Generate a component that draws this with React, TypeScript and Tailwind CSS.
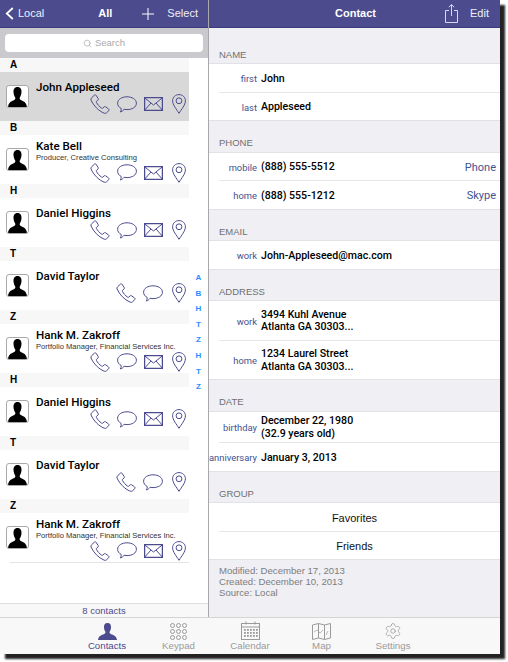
import { Search, Settings } from "lucide-react";

const ink = "#4b4b8e";

function PhoneIcon() {
  return (
    <svg width="20" height="20" viewBox="0 0 20 20" fill="none" stroke={ink} strokeWidth="1">
      <path d="M1.6 3.8 L4.6 1 C5.2 .6 5.8 .8 6.1 1.3 L8.2 4.6 C8.5 5.2 8.4 5.7 8 6 L6.5 7.3 C6.2 7.6 6.2 8 6.4 8.4 C7.6 10.6 9.3 12.6 11.7 14.2 C12.1 14.4 12.5 14.4 12.8 14.1 L14.2 12.8 C14.6 12.5 15.1 12.5 15.6 12.8 L18.6 15 C19.2 15.5 19.2 16.1 18.8 16.6 L16.4 18.9 C15.8 19.4 15 19.5 14.2 19.2 C8.4 16.8 3.6 11.6 1 6 C.8 5.2 1 4.4 1.6 3.8 Z" />
    </svg>
  );
}

function BubbleIcon() {
  return (
    <svg width="20" height="17" viewBox="0 0 20 17" fill="none" stroke={ink} strokeWidth="1">
      <path d="M10 .8 C15 .8 19.4 3.3 19.4 7.2 C19.4 11.1 15.2 13.6 10 13.6 C9 13.6 8 13.5 7.1 13.3 C6.2 14.5 4.8 15.6 3.4 16 C4 15 4.3 13.8 4.2 12.5 C1.9 11.3 .6 9.4 .6 7.2 C.6 3.3 5 .8 10 .8 Z" />
    </svg>
  );
}

function MailIcon() {
  return (
    <svg width="19" height="14" viewBox="0 0 19 14" fill="none" stroke={ink}>
      <rect x=".6" y=".6" width="17.8" height="12.8" strokeWidth="1.3" />
      <path d="M.6 .8 L9.5 8 L18.4 .8 M.6 13.2 L7 6 M18.4 13.2 L12 6" strokeWidth="1" />
    </svg>
  );
}

function PinIcon() {
  return (
    <svg width="14" height="20" viewBox="0 0 14 20" fill="none" stroke={ink} strokeWidth="1">
      <path d="M7 19.3 C4.6 15.4 .6 10.8 .6 6.8 C.6 3.2 3.4 .6 7 .6 C10.6 .6 13.4 3.2 13.4 6.8 C13.4 10.8 9.4 15.4 7 19.3 Z" />
      <circle cx="7" cy="6.8" r="2.9" />
    </svg>
  );
}

function Avatar() {
  return (
    <div className="flex h-[23px] w-[23px] shrink-0 items-end justify-center overflow-hidden rounded-[3px] border border-[#a9a9a9] bg-white">
      <svg width="19" height="20" viewBox="0 0 19 20" fill="#000">
        <path d="M9.5 0 C12.4 0 13.6 2.2 13.5 5 C13.4 7.6 12.6 9.4 11.8 10.6 C11.4 11.6 11.7 12.4 12.8 13 C15.4 14.2 18.4 15 19 20 L0 20 C.6 15 3.6 14.2 6.2 13 C7.3 12.4 7.6 11.6 7.2 10.6 C6.4 9.4 5.6 7.6 5.5 5 C5.4 2.2 6.6 0 9.5 0 Z" />
      </svg>
    </div>
  );
}

type Person = { letter: string; name: string; title?: string; mail: boolean; selected?: boolean };

const people: Person[] = [
  { letter: "A", name: "John Appleseed", mail: true, selected: true },
  { letter: "B", name: "Kate Bell", title: "Producer, Creative Consulting", mail: true },
  { letter: "H", name: "Daniel Higgins", mail: true },
  { letter: "T", name: "David Taylor", mail: false },
  { letter: "Z", name: "Hank M. Zakroff", title: "Portfolio Manager, Financial Services Inc.", mail: true },
  { letter: "H", name: "Daniel Higgins", mail: true },
  { letter: "T", name: "David Taylor", mail: false },
  { letter: "Z", name: "Hank M. Zakroff", title: "Portfolio Manager, Financial Services Inc.", mail: true },
];

function PersonRow({ person }: { person: Person }) {
  return (
    <>
      <div className="flex h-[14px] w-[189px] items-center bg-[#f7f7f7] pl-[10px] text-[10px] font-bold leading-none text-black">
        {person.letter}
      </div>
      <div className={`flex h-[49px] w-[189px] items-center pl-[6px] ${person.selected ? "bg-[#d8d8d8]" : "bg-white"}`}>
        <Avatar />
        <div className="flex h-full min-w-0 flex-1 flex-col pl-[7px]">
          <div className={`font-['Roboto',sans-serif] text-[11.6px] font-medium leading-[14px] text-black ${person.title ? "pt-[3.5px]" : "pt-[8px]"}`}>{person.name}</div>
          {person.title && <div className="truncate text-[7.6px] leading-[10px] text-[#333]">{person.title}</div>}
          <div className="flex items-center justify-end gap-[7px] pr-[3px]">
            <PhoneIcon />
            <BubbleIcon />
            {person.mail && <MailIcon />}
            <div className="ml-[2px]">
              <PinIcon />
            </div>
          </div>
        </div>
      </div>
    </>
  );
}

function SectionTitle({ title, first }: { title: string; first?: boolean }) {
  return (
    <div className={`flex items-end border-b border-[#e2e2e6] pb-[4px] pl-[10px] text-[9.5px] leading-none text-[#6f6f73] ${first ? "h-[36px]" : "h-[31.5px]"}`}>
      {title}
    </div>
  );
}

function Field({ label, lines, action, height }: { label: string; lines: string[]; action?: string; height: string }) {
  return (
    <div className={`flex items-center pt-[2px] ${height}`}>
      <div className="w-[48px] shrink-0 text-right font-['Roboto',sans-serif] text-[9.4px] leading-none text-[#3f5390]">{label}</div>
      <div className="flex-1 pl-[4px] font-['Roboto',sans-serif] text-[10.6px] font-medium leading-[12.5px] text-black">
        {lines.map((line) => (
          <div key={line}>{line}</div>
        ))}
      </div>
      {action && <div className="pr-[4px] font-['Roboto',sans-serif] text-[11px] leading-none text-[#3f5390]">{action}</div>}
    </div>
  );
}

function Group({ children }: { children: React.ReactNode }) {
  return <div className="border-b border-[#e2e2e6] bg-white">{children}</div>;
}

function RowLine() {
  return <div className="ml-[10px] h-px bg-[#e6e6e8]" />;
}

function TabItem({ label, active, children }: { label: string; active?: boolean; children: React.ReactNode }) {
  return (
    <div className={`flex w-[71.5px] flex-col items-center ${active ? "text-[#4b4b8e]" : "text-[#9a9a9a]"}`}>
      <div className="flex h-[22px] items-end justify-center">{children}</div>
      <div className="text-[9.7px] leading-[12px]">{label}</div>
    </div>
  );
}

export default function App() {
  return (
    <div className="h-[662px] w-[508px] bg-white font-['Liberation_Sans',sans-serif]">
      <div className="flex h-[654px] w-[500px] flex-col shadow-[5px_5px_2px_#222222]">
        <div className="flex min-h-0 flex-1">
          {/* Contact list */}
          <div className="relative flex w-[208px] shrink-0 flex-col bg-white">
            <div className="flex h-[28px] items-center border-b border-[#3a3a80] bg-[#4b4b8e] text-[11px] text-[#f0f0f8]">
              <svg width="9" height="13" viewBox="0 0 9 13" fill="none" stroke="#fff" strokeWidth="1.8" className="ml-[5px]">
                <path d="M7.8 1 L1.8 6.5 L7.8 12" />
              </svg>
              <span className="ml-[4px]">Local</span>
              <span className="ml-[54px] font-bold text-white">All</span>
              <svg width="12" height="12" viewBox="0 0 12 12" stroke="#fff" strokeWidth="1" className="ml-[30px]">
                <path d="M6 0 V12 M0 6 H12" />
              </svg>
              <span className="ml-[13px]">Select</span>
            </div>
            <div className="h-[30px] bg-[#c9c9ce] px-[5px] pt-[6px]">
              <div className="flex h-[18px] items-center justify-center gap-[3px] rounded-[4px] bg-white text-[9.5px] text-[#aaaaaa]">
                <Search size={9} strokeWidth={1.5} color="#999999" />
                <span>Search</span>
              </div>
            </div>
            <div>
              {people.map((person, i) => (
                <PersonRow key={i} person={person} />
              ))}
            </div>
            <div className="ml-[10px] h-px w-[179px] bg-[#e4e4e4]" />
            <div className="flex-1" />
            <div className="flex h-[14px] items-center justify-center border-t border-[#dddddd] bg-[#f8f8f8] text-[9.5px] leading-none text-[#4b4b8e]">
              8 contacts
            </div>
            <div className="absolute left-[189px] top-[270px] flex w-[19px] flex-col items-center text-[8px] font-bold leading-[15.6px] text-[#2b8cff]">
              {["A", "B", "H", "T", "Z", "H", "T", "Z"].map((letter, i) => (
                <div key={i}>{letter}</div>
              ))}
            </div>
          </div>
          <div className="w-px shrink-0 bg-[#a8a8ac]" />
          {/* Contact detail */}
          <div className="flex min-w-0 flex-1 flex-col bg-[#efeff4]">
            <div className="flex h-[28px] items-center border-b border-[#3a3a80] bg-[#4b4b8e] text-[11px] text-[#f0f0f8]">
              <span className="ml-[126px] w-[40px] whitespace-nowrap text-[11px] font-bold text-white">Contact</span>
              <svg width="13" height="19" viewBox="0 0 13 19" fill="none" stroke="#d8d8ee" strokeWidth="1" className="ml-[70px]">
                <path d="M4 6.5 H.5 V18.5 H12.5 V6.5 H9 M6.5 12 V.8 M3.8 3.2 L6.5 .6 L9.2 3.2" />
              </svg>
              <span className="ml-[12px]">Edit</span>
            </div>
            <SectionTitle title="NAME" first />
            <Group>
              <Field label="first" lines={["John"]} height="h-[27.5px]" />
              <RowLine />
              <Field label="last" lines={["Appleseed"]} height="h-[27.5px]" />
            </Group>
            <SectionTitle title="PHONE" />
            <Group>
              <Field label="mobile" lines={["(888) 555-5512"]} action="Phone" height="h-[27.5px]" />
              <RowLine />
              <Field label="home" lines={["(888) 555-1212"]} action="Skype" height="h-[27.5px]" />
            </Group>
            <SectionTitle title="EMAIL" />
            <Group>
              <Field label="work" lines={["John-Appleseed@mac.com"]} height="h-[27.5px]" />
            </Group>
            <SectionTitle title="ADDRESS" />
            <Group>
              <Field label="work" lines={["3494 Kuhl Avenue", "Atlanta GA 30303..."]} height="h-[38.5px]" />
              <RowLine />
              <Field label="home" lines={["1234 Laurel Street", "Atlanta GA 30303..."]} height="h-[38.5px]" />
            </Group>
            <SectionTitle title="DATE" />
            <Group>
              <Field label="birthday" lines={["December 22, 1980", "(32.9 years old)"]} height="h-[30.5px]" />
              <RowLine />
              <Field label="anniversary" lines={["January 3, 2013"]} height="h-[27.5px]" />
            </Group>
            <SectionTitle title="GROUP" />
            <Group>
              <div className="flex h-[27.5px] items-center justify-center pt-[2px] text-[11px] text-[#111]">Favorites</div>
              <RowLine />
              <div className="flex h-[27.5px] items-center justify-center pt-[2px] text-[11px] text-[#111]">Friends</div>
            </Group>
            <div className="px-[10px] pt-[5px] text-[9.6px] leading-[11px] text-[#7d7d80]">
              <div>Modified: December 17, 2013</div>
              <div>Created: December 10, 2013</div>
              <div>Source: Local</div>
            </div>
          </div>
        </div>
        {/* Tab bar */}
        <div className="flex h-[37px] justify-center border-t border-[#d4d4d4] bg-[#f8f8f8]">
          <TabItem label="Contacts" active>
            <svg width="19" height="17" viewBox="0 0 19 17" fill="#4b4b8e">
              <path d="M9.5 0 C12.2 0 13.2 2 13 4.4 C12.9 6.4 12.2 7.8 11.6 8.8 C11.3 9.8 11.8 10.4 12.8 10.9 C15.4 12 18.6 12.8 19 17 L0 17 C.4 12.8 3.6 12 6.2 10.9 C7.2 10.4 7.7 9.8 7.4 8.8 C6.8 7.8 6.1 6.4 6 4.4 C5.8 2 6.8 0 9.5 0 Z" />
            </svg>
          </TabItem>
          <TabItem label="Keypad">
            <svg width="17" height="17" viewBox="0 0 17 17" fill="none" stroke="#9a9a9a" strokeWidth="1">
              {[2.5, 8.5, 14.5].map((y) =>
                [2.5, 8.5, 14.5].map((x) => <circle key={`${x}-${y}`} cx={x} cy={y} r="2" />),
              )}
            </svg>
          </TabItem>
          <TabItem label="Calendar">
            <svg width="19" height="19" viewBox="0 0 19 19" fill="none" stroke="#9a9a9a" strokeWidth="1">
              <rect x=".5" y="2.5" width="18" height="16" />
              <path d="M.5 6 H18.5 M5 .5 V3.5 M14 .5 V3.5" />
              <g fill="#9a9a9a" stroke="none">
                {[8, 11, 14].map((y) =>
                  [3, 6, 9, 12, 15].map((x) => <rect key={`${x}-${y}`} x={x} y={y} width="1.8" height="1.8" />),
                )}
              </g>
            </svg>
          </TabItem>
          <TabItem label="Map">
            <svg width="19" height="17" viewBox="0 0 19 17" fill="none" stroke="#9a9a9a" strokeWidth="1">
              <path d="M.5 2 L6.5 .5 L12.5 2 L18.5 .5 V15 L12.5 16.5 L6.5 15 L.5 16.5 Z M6.5 .5 V15 M12.5 2 V16.5" />
              <path d="M2 9 L5 7 L8 10 L11 7 M14 12 L16 8" strokeWidth=".7" />
            </svg>
          </TabItem>
          <TabItem label="Settings">
            <Settings size={18} strokeWidth={1} color="#9a9a9a" />
          </TabItem>
        </div>
      </div>
    </div>
  );
}
